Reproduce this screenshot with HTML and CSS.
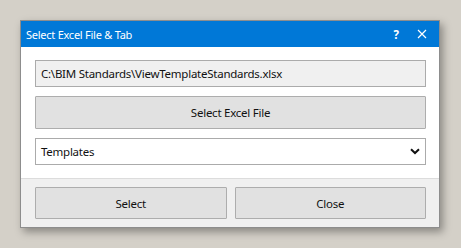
FILE: index.html
```html
<!DOCTYPE html>
<html>
<head>
  <title>Select Excel File &amp; Tab</title>
  <meta charset="UTF-8">
  <link rel="stylesheet" href="styles.css">
</head>
<body>
  <div class="window">
    <div class="titlebar">
      <span class="title">Select Excel File &amp; Tab</span>
      <span class="title-btn help">?</span>
      <span class="title-btn close">
        <svg width="10" height="10" viewBox="0 0 10 10"><path d="M1 1 L9 9 M9 1 L1 9" stroke="#fff" stroke-width="1.2"/></svg>
      </span>
    </div>

    <div class="content">
      <div class="path-box">C:\BIM Standards\ViewTemplateStandards.xlsx</div>
      <div class="btn btn-tall">Select Excel File</div>
      <div class="dropdown">
        <span>Templates</span>
        <svg width="10" height="7" viewBox="0 0 10 7"><path d="M1 1.2 L5 5 L9 1.2" fill="none" stroke="#111" stroke-width="2"/></svg>
      </div>
    </div>

    <div class="footer">
      <div class="btn">Select</div>
      <div class="btn">Close</div>
    </div>
  </div>
</body>
</html>
```

FILE: styles.css
```css
body {
  margin: 0;
  padding: 20px;
  background-color: #d4d0c8;
  font-family: "Noto Sans", "Open Sans", sans-serif;
  font-size: 11.5px;
  letter-spacing: -0.25px;
  color: #111;
}
.window {
  width: 418px;
  border: 1px solid #8d8d8d;
  background-color: #fff;
  box-shadow: 3px 4px 8px rgba(0, 0, 0, 0.35);
}
.titlebar {
  height: 26px;
  background-color: #0078d7;
  color: #fff;
  display: flex;
  align-items: center;
  padding-left: 5px;
}
.title {
  flex: 1;
  font-size: 11px;
}
.title-btn {
  width: 26px;
  display: flex;
  justify-content: center;
  font-weight: bold;
}
.close {
  margin-right: 4px;
}
.content {
  display: flex;
  flex-direction: column;
  gap: 9px;
  padding: 13px 13px 13px 14px;
}
.path-box {
  height: 25px;
  border: 1px solid #ababab;
  background-color: #f0f0f0;
  display: flex;
  align-items: center;
  padding-left: 5px;
}
.btn {
  border: 1px solid #adadad;
  background-color: #e1e1e1;
  display: flex;
  align-items: center;
  justify-content: center;
  border-radius: 1px;
}
.btn-tall {
  height: 31px;
}
.dropdown {
  height: 25px;
  border: 1px solid #ababab;
  display: flex;
  align-items: center;
  justify-content: space-between;
  padding: 0 5px 0 5px;
}
.footer {
  border-top: 1px solid #dcdcdc;
  background-color: #f0f0f0;
  display: flex;
  gap: 8px;
  padding: 8px 13px 8px 14px;
}
.footer .btn {
  flex: 1;
  height: 30px;
}
```
